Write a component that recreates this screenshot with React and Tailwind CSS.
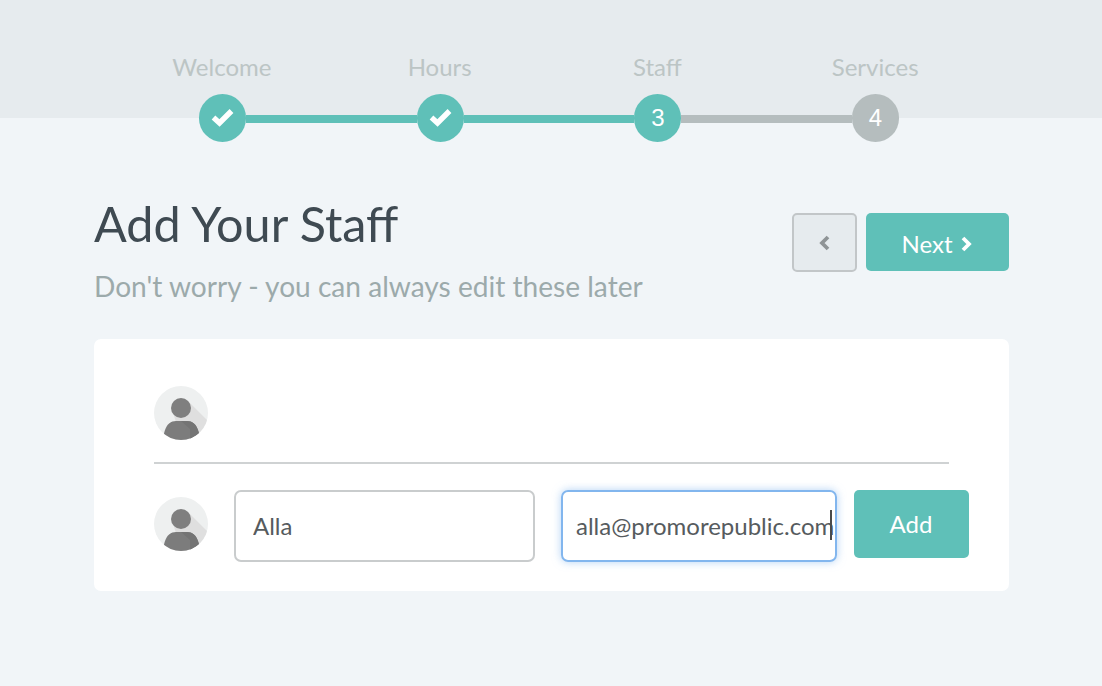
import React from 'react';

const steps = [
    { label: 'Welcome', done: true },
    { label: 'Hours', done: true },
    { label: 'Staff', current: true, num: 3 },
    { label: 'Services', num: 4 },
];

const CheckIcon = () => (
    <svg width="23" height="18" viewBox="0 0 23 18" fill="none" stroke="currentColor" strokeWidth="5.4">
        <path d="M2.5 8.5 L8.5 14 L20.5 2" />
    </svg>
);

const Chevron = ({ left }) => (
    <svg width="11" height="16" viewBox="0 0 11 16" fill="none" stroke="currentColor" strokeWidth="3.8">
        <path d={left ? 'M9 2 L3 8 L9 14' : 'M2 2 L8 8 L2 14'} />
    </svg>
);

const Avatar = () => (
    <svg width="54" height="54" viewBox="0 0 54 54" className="shrink-0">
        <defs>
            <clipPath id="avatarClip">
                <circle cx="27" cy="27" r="27" />
            </clipPath>
        </defs>
        <g clipPath="url(#avatarClip)">
            <rect width="54" height="54" fill="#eef0f0" />
            <path d="M34 15 L60 41 L60 60 L30 60 L20 30 Z" fill="#dfdfdf" />
            <path d="M8 54 L11 44 C13 38 17 35 22 35 L33 35 C38 35 42 38 44 44 L47 54 Z" fill="#7c7c7c" />
            <path d="M27 35 L33 35 C38 35 42 38 44 44 L47 54 L36 54 L36 43 Z" fill="#747474" />
            <circle cx="27" cy="22" r="10" fill="#7f7f7f" />
        </g>
    </svg>
);

const Step = ({ step }) => {
    const color = step.done || step.current ? 'bg-[#5fc0b8]' : 'bg-[#b5bdbe]';
    return (
        <div className={`w-[47px] h-[48px] shrink-0 rounded-full ${color} flex items-center justify-center text-white text-[24px] font-['Liberation_Sans',sans-serif]`}>
            {step.done ? <CheckIcon /> : step.num}
        </div>
    );
};

export default function App() {
    return (
        <div className="w-full h-[686px] overflow-hidden bg-[#f1f5f8] font-['Lato',sans-serif]">
            <div className="h-[118px] bg-[#e6ebee]">
                <div className="w-[871px] ml-[113px] pt-[49px] grid grid-cols-4 text-center text-[24px] leading-[36px] text-[#bcc5c5]">
                    {steps.map((s) => (
                        <div key={s.label}>{s.label}</div>
                    ))}
                </div>
                <div className="w-[700px] ml-[199px] mt-[9px] flex items-center">
                    <Step step={steps[0]} />
                    <div className="flex-1 h-2 mt-[1px] bg-[#5fc0b8]" />
                    <Step step={steps[1]} />
                    <div className="flex-1 h-2 mt-[1px] bg-[#5fc0b8]" />
                    <Step step={steps[2]} />
                    <div className="flex-1 h-2 mt-[1px] bg-[#b5bdbe]" />
                    <Step step={steps[3]} />
                </div>
            </div>

            <div className="w-[915px] ml-[94px]">
                <div className="flex items-start justify-between pt-[95px]">
                    <div className="-mt-[25px]">
                        <h1 className="text-[48.5px] leading-[70px] text-[#3f4a52] font-normal">Add Your Staff</h1>
                        <p className="text-[28.1px] leading-[40px] mt-[8px] text-[#9caaab]">Don't worry - you can always edit these later</p>
                    </div>
                    <div className="flex gap-[9px]">
                        <button className="w-[65px] h-[59px] rounded-[5px] border-2 border-[#c2c6c8] bg-[#e6ebee] flex items-center justify-center text-[#8f9496]">
                            <Chevron left />
                        </button>
                        <button className="w-[143px] h-[58px] pt-[4px] pr-[2px] rounded-[5px] bg-[#5fc0b8] text-white text-[24px] flex items-center justify-center gap-[8px]">
                            Next <Chevron />
                        </button>
                    </div>
                </div>

                <div className="mt-[33px] h-[252px] bg-white rounded-[7px] pl-[60px] pr-[40px] pt-[47px]">
                    <div className="mr-[20px] pb-[22px] border-b-2 border-[#cfd2d3]">
                        <Avatar />
                    </div>
                    <div className="flex items-start mt-[26px]">
                        <div className="mt-[7px]">
                            <Avatar />
                        </div>
                        <input
                            readOnly
                            value="Alla"
                            className="ml-[26px] w-[301px] h-[72px] rounded-[7px] border-2 border-[#c9cccd] px-[17px] pb-[2px] text-[24px] text-[#565b5e] outline-none"
                        />
                        <div className="relative ml-[26px]">
                            <input
                                readOnly
                                value="alla@promorepublic.com"
                                className="w-[276px] h-[72px] rounded-[7px] border-2 border-[#82b6ee] shadow-[0_0_8px_rgba(130,182,238,0.6)] pl-[13px] pr-0 pb-[2px] text-[24px] text-[#565b5e] outline-none"
                            />
                            <div className="absolute left-[269px] top-[20px] w-[2px] h-[30px] bg-[#4a4a4a]" />
                        </div>
                        <button className="ml-[17px] w-[115px] h-[68px] pr-[1px] rounded-[5px] bg-[#5fc0b8] text-white text-[24px]">Add</button>
                    </div>
                </div>
            </div>
        </div>
    );
}
